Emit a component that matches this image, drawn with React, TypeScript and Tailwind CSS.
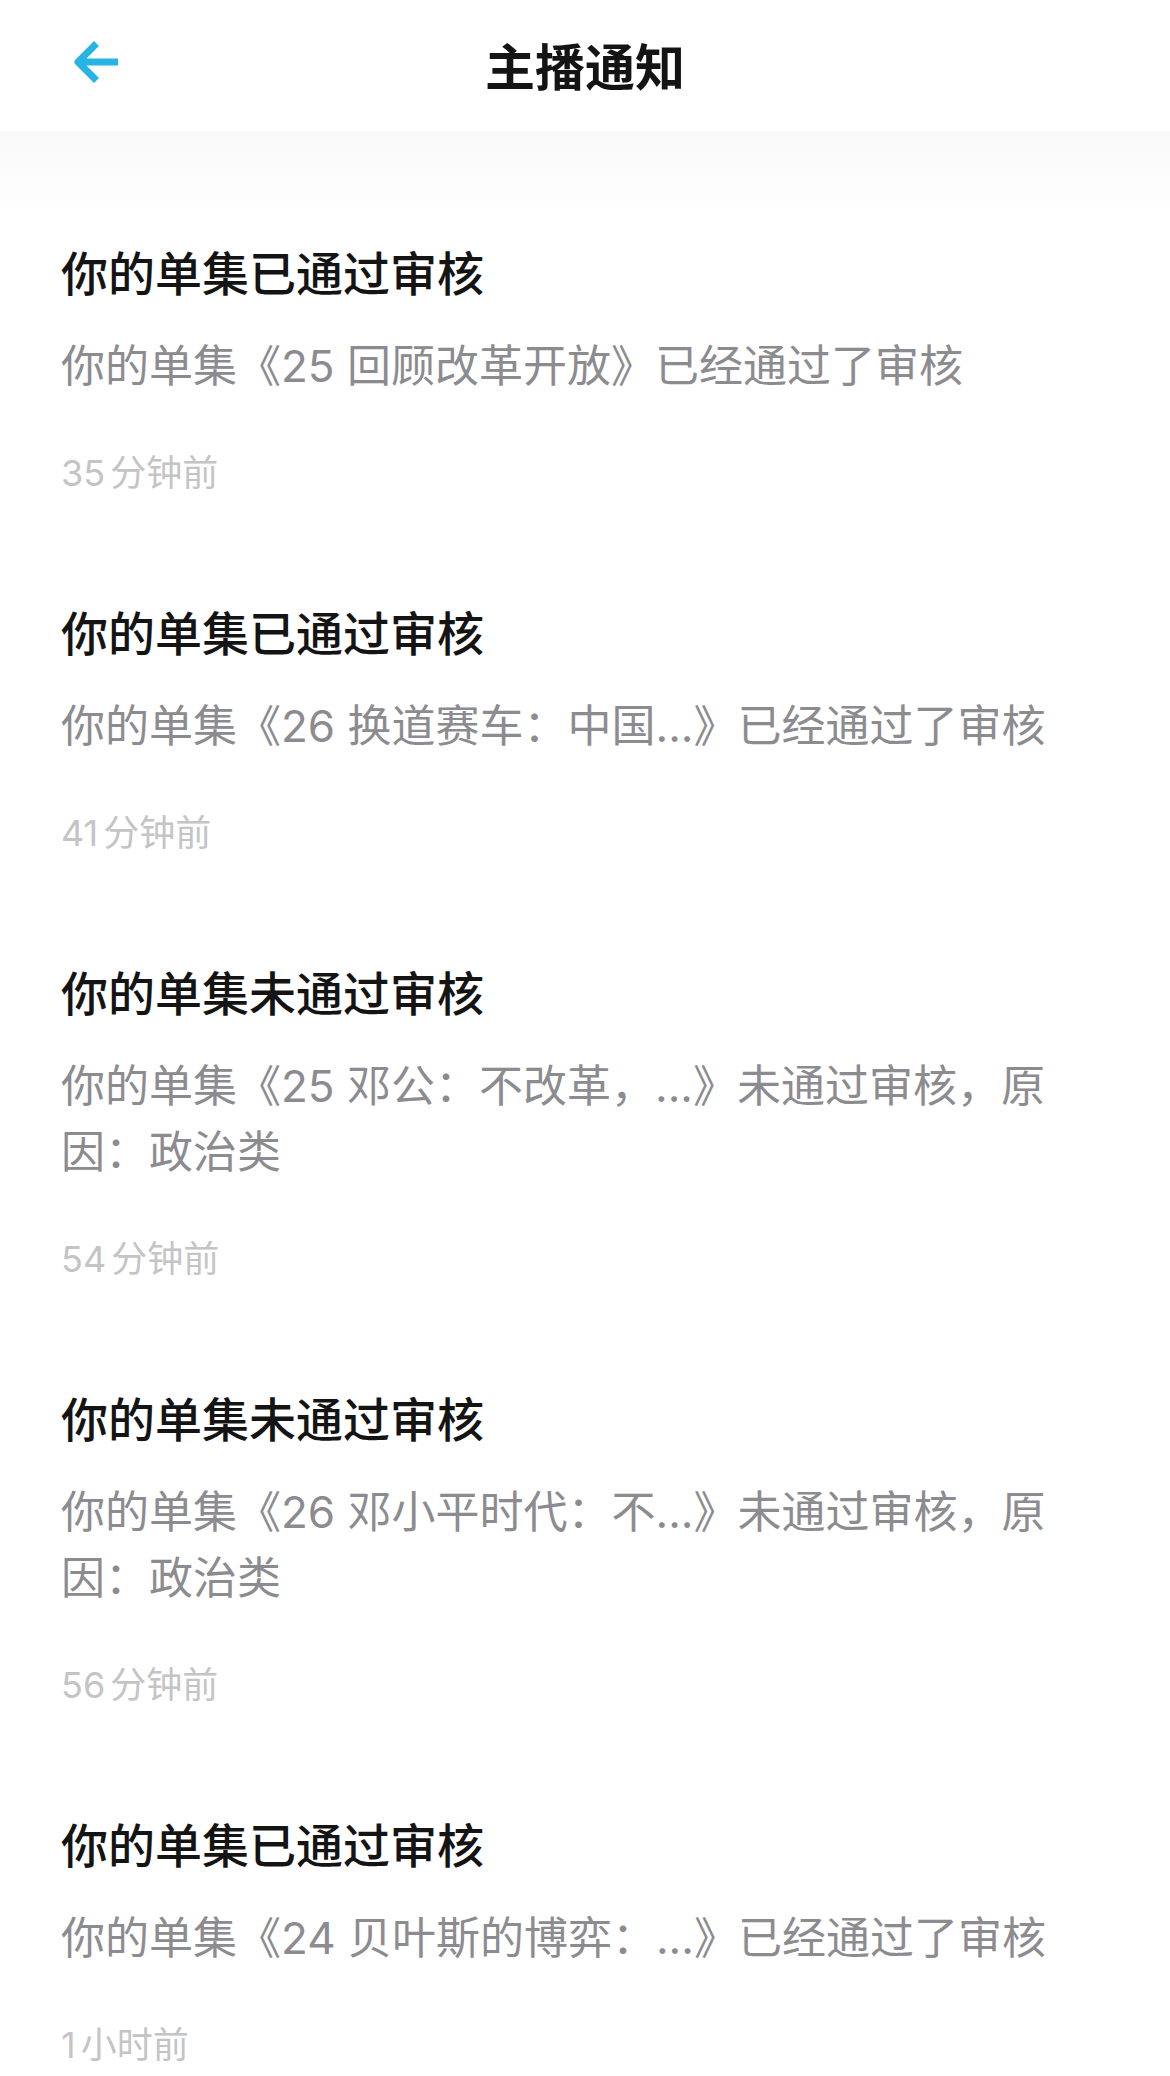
// 主播通知 · 通知列表页面
import { useState } from 'react'

type Aviso = {
  id: number
  titulo: string
  lineas: string[]
  num: string
  unidad: string
}

const AVISOS: Aviso[] = [
  { id: 1, titulo: '你的单集已通过审核', lineas: ['你的单集《25 回顾改革开放》已经通过了审核'], num: '35', unidad: '分钟前' },
  { id: 2, titulo: '你的单集已通过审核', lineas: ['你的单集《26 换道赛车：中国...》已经通过了审核'], num: '41', unidad: '分钟前' },
  { id: 3, titulo: '你的单集未通过审核', lineas: ['你的单集《25 邓公：不改革，...》未通过审核，原', '因：政治类'], num: '54', unidad: '分钟前' },
  { id: 4, titulo: '你的单集未通过审核', lineas: ['你的单集《26 邓小平时代：不...》未通过审核，原', '因：政治类'], num: '56', unidad: '分钟前' },
  { id: 5, titulo: '你的单集已通过审核', lineas: ['你的单集《24 贝叶斯的博弈：...》已经通过了审核'], num: '1', unidad: '小时前' },
]

const FONT = "font-['Inter','Noto_Sans_CJK_SC',sans-serif]"

function BackArrow() {
  return (
    <svg width="48" height="48" viewBox="0 0 48 48" fill="none">
      <path
        d="M46 24H7M24.5 5.5L6 24l18.5 18.5"
        stroke="#27b3e4"
        strokeWidth="7"
        strokeLinejoin="round"
      />
    </svg>
  )
}

export default function App() {
  const [avisos] = useState(AVISOS)

  return (
    <div className={`min-h-screen bg-white ${FONT}`}>
      <header className="relative h-[131px] flex items-center justify-center bg-white">
        <button className="absolute left-[72px] top-[38px]">
          <BackArrow />
        </button>
        <h1 className="text-[50px] leading-[60px] font-semibold text-[#141414] pt-[4px]">主播通知</h1>
      </header>
      <div className="h-[90px] bg-gradient-to-b from-[#f9f9f9] to-white" />

      <ul className="pt-[20px] pl-[61px] pr-[60px]">
        {avisos.map((a) => (
          <li key={a.id} className="pb-[103px]">
            <div className="text-[47px] leading-[66px] font-medium text-[#141414]">{a.titulo}</div>
            <div className="mt-[26px] text-[44px] leading-[66px] text-[#8c8c90]">
              {a.lineas.map((l, i) => (
                <div key={i} className="whitespace-nowrap">{l}</div>
              ))}
            </div>
            <div className="mt-[49px] text-[36px] leading-[50px] text-[#c4c4c6]">
              <span className="mr-[5px]">{a.num}</span>
              {a.unidad}
            </div>
          </li>
        ))}
      </ul>
    </div>
  )
}
